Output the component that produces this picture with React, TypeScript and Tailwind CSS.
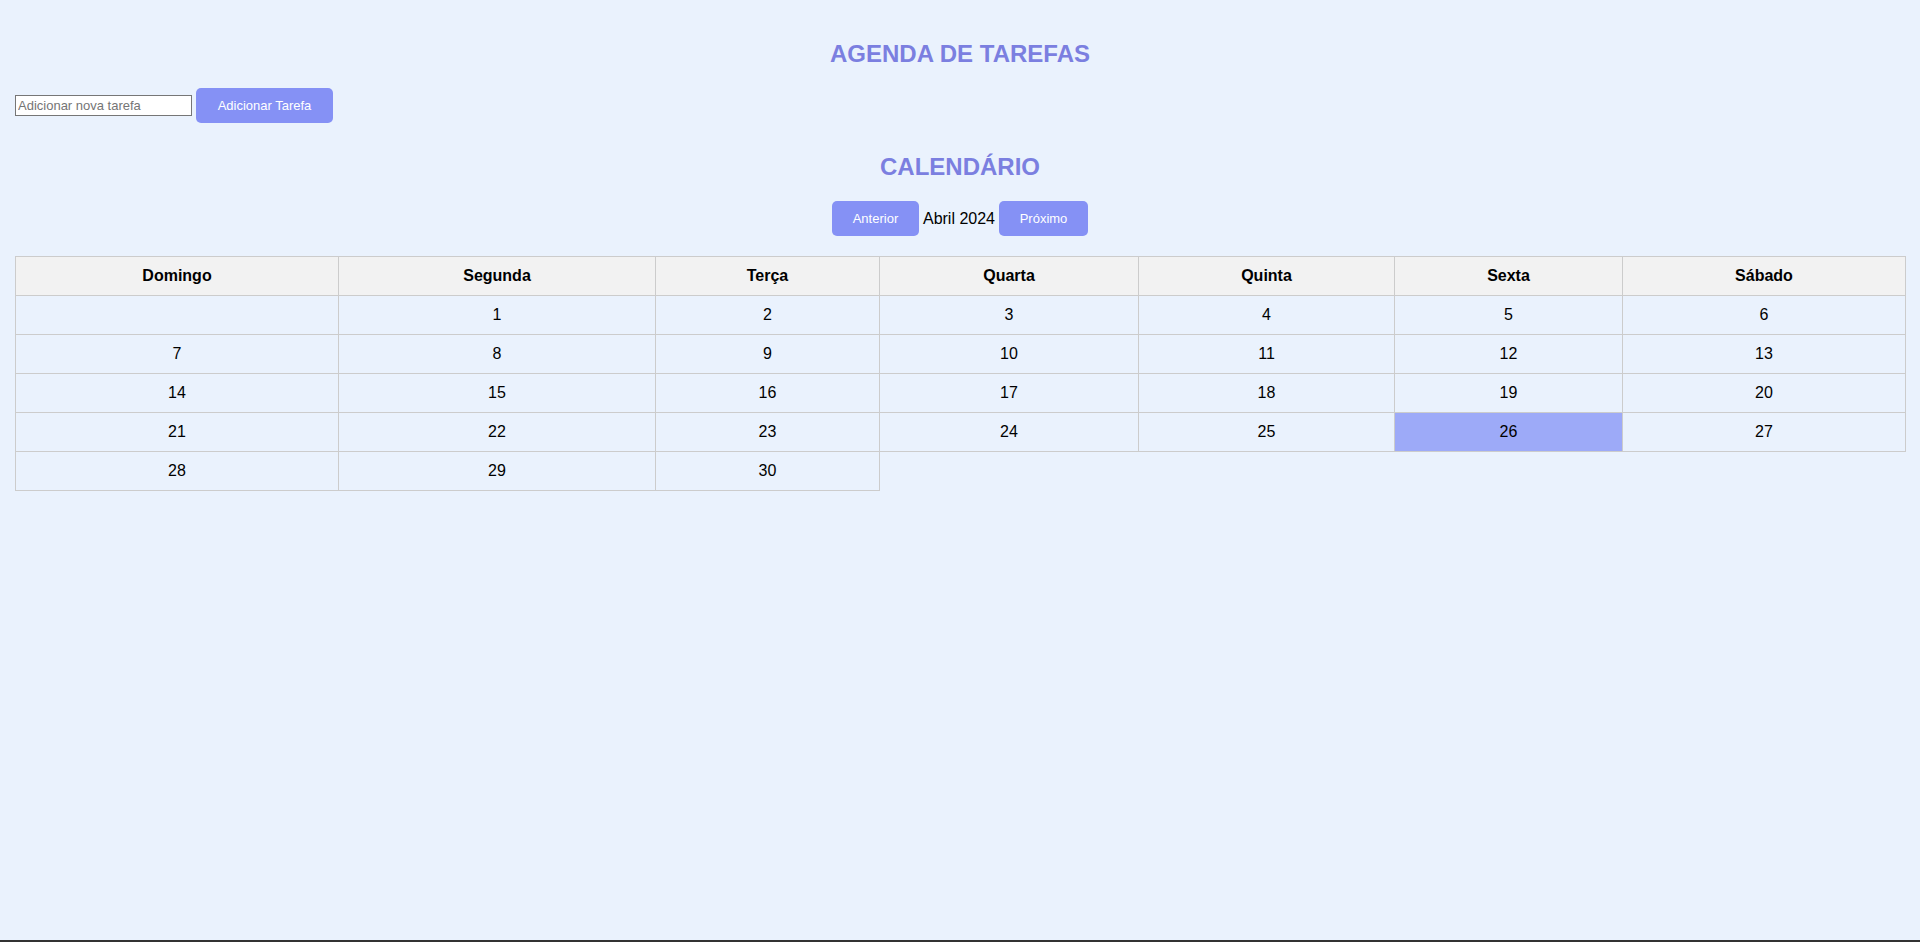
import { useState } from "react"

const dias = ["Domingo", "Segunda", "Terça", "Quarta", "Quinta", "Sexta", "Sábado"]
const larguras = ["w-[323px]", "w-[317px]", "w-[224px]", "w-[259px]", "w-[256px]", "w-[228px]", "w-[283px]"]

function semanas() {
  const out: (number | null)[][] = []
  let linha: (number | null)[] = [null]
  for (let d = 1; d <= 30; d++) {
    linha.push(d)
    if (linha.length === 7) {
      out.push(linha)
      linha = []
    }
  }
  if (linha.length) out.push(linha)
  return out
}

export default function App() {
  const [tarefa, setTarefa] = useState("")
  const hoje = 26

  return (
    <div className="flex h-[942px] flex-col bg-[#eaf2fd] font-['Liberation_Sans',Arial,sans-serif] text-black">
      <div className="flex-1 px-[15px] pt-[40px]">
        <h2 className="text-center text-[24px] font-bold leading-[28px] text-[#7b7fe0]">AGENDA DE TAREFAS</h2>

        <div className="mt-[20px] flex items-center gap-[4px]">
          <input
            value={tarefa}
            onChange={(e) => setTarefa(e.target.value)}
            placeholder="Adicionar nova tarefa"
            className="h-[21px] w-[177px] border border-[#767676] bg-white px-[2px] text-[13px] placeholder:text-[#757575]"
          />
          <button className="h-[35px] w-[137px] rounded-[5px] bg-[#8591f5] text-[13px] text-white">
            Adicionar Tarefa
          </button>
        </div>

        <h2 className="mt-[30px] text-center text-[24px] font-bold leading-[28px] text-[#7b7fe0]">CALENDÁRIO</h2>

        <div className="mt-[20px] flex items-center justify-center gap-[4px]">
          <button className="h-[35px] w-[87px] rounded-[5px] bg-[#8591f5] text-[13px] text-white">Anterior</button>
          <span className="text-[16px]">Abril 2024</span>
          <button className="h-[35px] w-[89px] rounded-[5px] bg-[#8591f5] text-[13px] text-white">Próximo</button>
        </div>

        <table className="mt-[20px] w-full table-fixed border-collapse text-[16px]">
          <colgroup>
            {larguras.map((w, i) => (
              <col key={i} className={w} />
            ))}
          </colgroup>
          <thead>
            <tr>
              {dias.map((d) => (
                <th key={d} className="h-[39px] border border-[#cccccc] bg-[#f2f2f2] p-0 text-center font-bold">
                  {d}
                </th>
              ))}
            </tr>
          </thead>
          <tbody>
            {semanas().map((s, i) => (
              <tr key={i}>
                {s.map((d, j) => (
                  <td
                    key={j}
                    className={
                      "h-[39px] border border-[#cccccc] p-0 text-center " + (d === hoje ? "bg-[#9daaf8]" : "")
                    }
                  >
                    {d ?? ""}
                  </td>
                ))}
              </tr>
            ))}
          </tbody>
        </table>
      </div>
      <div className="h-[2px] bg-[#333333]" />
    </div>
  )
}
